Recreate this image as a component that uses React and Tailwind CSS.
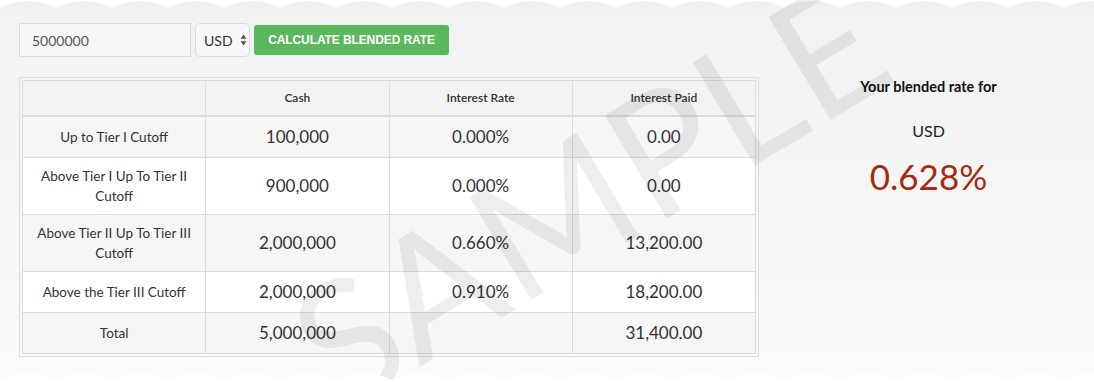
import React from 'react';

const rows = [
  { label: 'Up to Tier I Cutoff', cash: '100,000', rate: '0.000%', paid: '0.00' },
  { label: 'Above Tier I Up To Tier II Cutoff', cash: '900,000', rate: '0.000%', paid: '0.00' },
  { label: 'Above Tier II Up To Tier III Cutoff', cash: '2,000,000', rate: '0.660%', paid: '13,200.00' },
  { label: 'Above the Tier III Cutoff', cash: '2,000,000', rate: '0.910%', paid: '18,200.00' },
  { label: 'Total', cash: '5,000,000', rate: '', paid: '31,400.00' },
];

// scalloped "torn paper" edge, one bump every 56px
function wave(width, base, peak, bottom) {
  let d = `M0,${bottom} L0,${base}`;
  for (let x = 0; x < width; x += 56) {
    d += ` Q${x + 28},${peak} ${x + 56},${base}`;
  }
  d += ` L${width + 56},${bottom} Z`;
  return d;
}

function TornEdge({ top }) {
  return (
    <svg
      className={top ? 'absolute left-0 top-0' : 'absolute left-0 bottom-0'}
      width="1094"
      height="14"
      viewBox={top ? '0 0 1094 14' : '0 368 1094 14'}
    >
      {top ? (
        <path d={wave(1094, 8, -6, 0)} fill="#ffffff" />
      ) : (
        <path d={wave(1094, 380, 366, 382)} fill="#ffffff" />
      )}
    </svg>
  );
}

function SortArrows() {
  return (
    <svg width="7" height="12" viewBox="0 0 7 12" className="ml-[7px]">
      <path d="M3.5 0.5 L6.5 4.8 L0.5 4.8 Z" fill="#555" />
      <path d="M3.5 11.5 L6.5 7.2 L0.5 7.2 Z" fill="#555" />
    </svg>
  );
}

export default function App() {
  return (
    <div
      className="relative w-[1094px] h-[382px] overflow-hidden bg-gradient-to-b from-[#f1f1f1] to-[#fbfbfb] text-[#333]"
      style={{ fontFamily: 'Lato, "Open Sans", sans-serif' }}
    >
      <TornEdge top />

      <div className="flex">
        <div className="w-[763px] pl-[19px] pt-[23px]">
          <div className="flex items-center">
            <input
              readOnly
              value="5000000"
              className="w-[172px] h-[34px] border border-[#dcdcdc] bg-[#f7f7f7] pl-[12px] text-[14px] text-[#555] outline-none"
            />
            <div className="ml-[4px] flex items-center w-[55px] h-[34px] border border-[#dcdcdc] rounded-[5px] bg-[#f7f7f7] pl-[8px] text-[14px] text-[#333]">
              USD
              <SortArrows />
            </div>
            <button
              className="ml-[4px] w-[195px] h-[30px] rounded-[3px] bg-[#5cb85c] text-white text-[12px] font-bold tracking-[-0.1px]"
              style={{ fontFamily: '"Liberation Sans", Arial, sans-serif' }}
            >
              CALCULATE BLENDED RATE
            </button>
          </div>

          <div className="mt-[20px] w-[740px] border border-[#dcdcdc] p-[2px]">
            <table className="w-full table-fixed border-collapse text-center">
              <thead>
                <tr className="bg-[#f2f2f2]">
                  <th className="border border-[#dcdcdc] border-b-2 py-[7px] leading-5 text-[12px] font-semibold"></th>
                  <th className="border border-[#dcdcdc] border-b-2 py-[7px] leading-5 text-[12px] font-semibold">Cash</th>
                  <th className="border border-[#dcdcdc] border-b-2 py-[7px] leading-5 text-[12px] font-semibold">Interest Rate</th>
                  <th className="border border-[#dcdcdc] border-b-2 py-[7px] leading-5 text-[12px] font-semibold">Interest Paid</th>
                </tr>
              </thead>
              <tbody>
                {rows.map((r, i) => (
                  <tr key={r.label} className={i % 2 === 0 ? 'bg-[#f6f6f6]' : 'bg-white'}>
                    <td className="border border-[#dcdcdc] px-[8px] py-[8px] leading-5 text-[13.5px] align-middle">{r.label}</td>
                    <td className="border border-[#dcdcdc] py-[8px] leading-[24px] text-[17px] align-middle">{r.cash}</td>
                    <td className="border border-[#dcdcdc] py-[8px] leading-[24px] text-[17px] align-middle">{r.rate}</td>
                    <td className="border border-[#dcdcdc] py-[8px] leading-[24px] text-[17px] align-middle">{r.paid}</td>
                  </tr>
                ))}
              </tbody>
            </table>
          </div>
        </div>

        <div className="flex-1 pt-[77px] text-center">
          <div className="text-[14.5px] leading-5 font-bold text-[#111]">Your blended rate for</div>
          <div className="mt-[24px] text-[16px] leading-5 text-[#222]">USD</div>
          <div className="mt-[13px] text-[35px] leading-[44px] text-[#a8290f]">0.628%</div>
        </div>
      </div>

      <div className="pointer-events-none absolute left-[588px] top-[190px] -translate-x-1/2 -translate-y-1/2 -rotate-[31deg] text-[168px] leading-none tracking-[2px] text-[rgba(0,0,0,0.065)] whitespace-nowrap">
        SAMPLE
      </div>

      <TornEdge />
    </div>
  );
}
